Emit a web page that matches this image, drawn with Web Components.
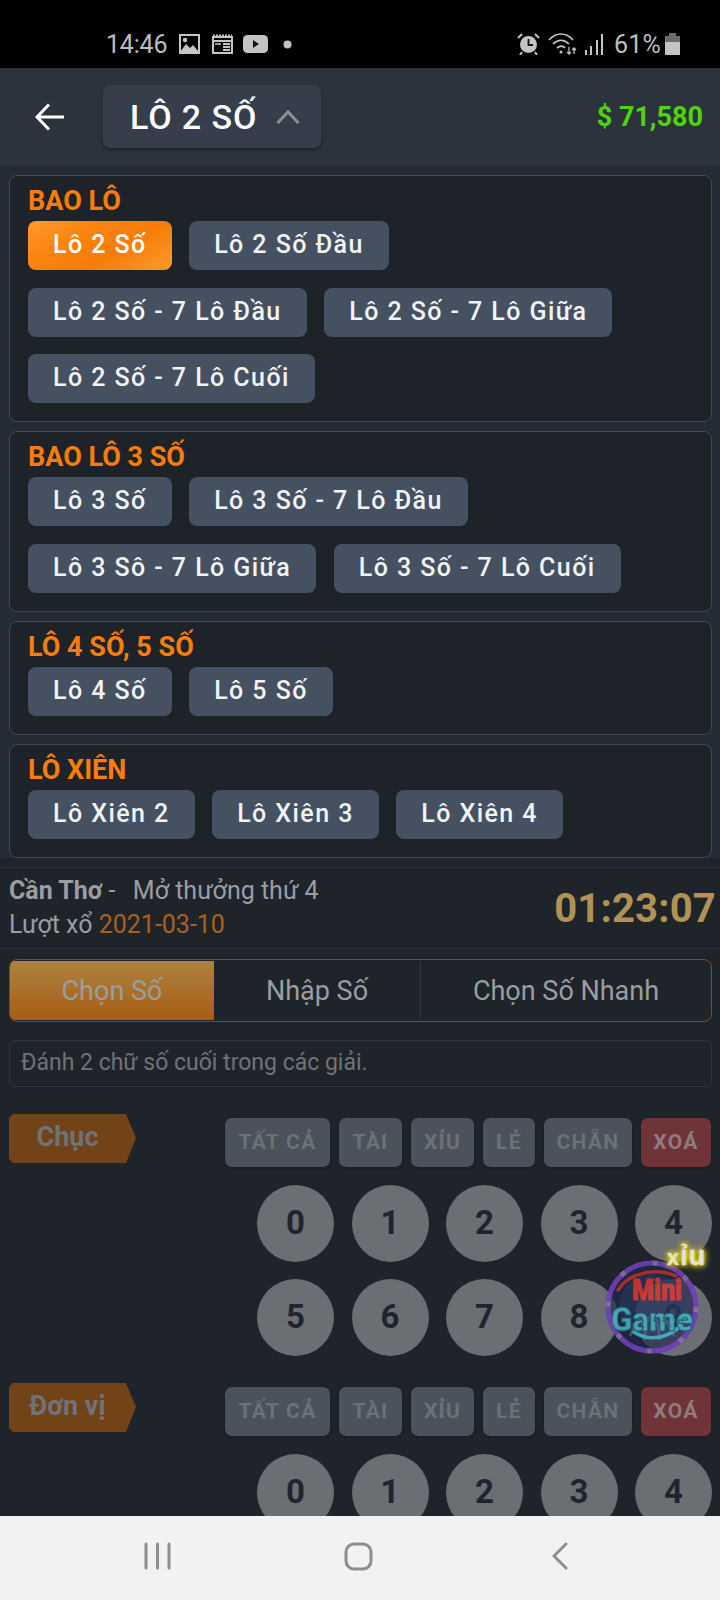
<!DOCTYPE html>
<html lang="vi"><head><meta charset="utf-8"><title>Lô 2 Số</title>
<style>
html,body{margin:0;padding:0;background:#000}
body{width:720px;height:1600px;overflow:hidden;font-family:Roboto,"Noto Sans",sans-serif;position:relative}
app-shell{display:flex}
</style></head><body>
<app-shell>
  <status-bar slot="top"></status-bar>
  <app-header slot="top" title="LÔ 2 SỐ" money="$ 71,580"></app-header>
  <menu-panel title="BAO LÔ" active="Lô 2 Số" items="Lô 2 Số|Lô 2 Số Đầu|Lô 2 Số - 7 Lô Đầu|Lô 2 Số - 7 Lô Giữa|Lô 2 Số - 7 Lô Cuối"></menu-panel>
  <menu-panel title="BAO LÔ 3 SỐ" items="Lô 3 Số|Lô 3 Số - 7 Lô Đầu|Lô 3 Sô - 7 Lô Giữa|Lô 3 Số - 7 Lô Cuối"></menu-panel>
  <menu-panel title="LÔ 4 SỐ, 5 SỐ" items="Lô 4 Số|Lô 5 Số"></menu-panel>
  <menu-panel title="LÔ XIÊN" items="Lô Xiên 2|Lô Xiên 3|Lô Xiên 4"></menu-panel>
  <draw-info></draw-info>
  <tab-bar></tab-bar>
  <hint-box>Đánh 2 chữ số cuối trong các giải.</hint-box>
  <number-pick label="Chục"></number-pick>
  <number-pick label="Đơn vị"></number-pick>
  <mini-game slot="float"></mini-game>
  <nav-bar slot="bottom"></nav-bar>
</app-shell>
<script>
const def=(name,html,setup)=>customElements.define(name,class extends HTMLElement{
  constructor(){super();this.attachShadow({mode:'open'})}
  connectedCallback(){this.shadowRoot.innerHTML=typeof html==='function'?html(this):html;if(setup)setup(this)}
});
def('app-shell',`<style>
:host{display:flex;flex-direction:column;width:720px;height:1600px;position:relative;overflow:hidden;background:#1f242b}
main{flex:1;min-height:0;overflow:hidden;display:block}
</style><slot name="top"></slot><main><slot></slot></main><slot name="bottom"></slot><slot name="float"></slot>`);

def('status-bar',`<style>
:host{display:flex;align-items:center;height:68px;background:#000;color:#bdbdbd;font:400 25px Roboto,sans-serif;padding:20px 40px 0 106px;box-sizing:border-box}
svg{display:block;flex:none}
.t{letter-spacing:-.2px}
.sp{flex:1}
</style>
<span class="t">14:46</span>
<svg style="margin-left:12px" width="21" height="20" viewBox="0 0 21 20"><rect x="1" y="1" width="19" height="18" fill="none" stroke="#c4c4c4" stroke-width="2"/><path d="M1 18l6-8 4 4 3-3 6 7v1H1z" fill="#c4c4c4"/><circle cx="6" cy="6" r="2.200" fill="#c4c4c4"/></svg>
<svg style="margin-left:12px" width="21" height="20" viewBox="0 0 21 20"><path d="M1 3h19v16H1z" fill="none" stroke="#c4c4c4" stroke-width="2"/><path d="M1 1.500h19" stroke="#c4c4c4" stroke-width="2" stroke-dasharray="2 1"/><path d="M1 7h19" stroke="#c4c4c4" stroke-width="2"/><path d="M11 10h7M11 13h7M11 16h7" stroke="#c4c4c4" stroke-width="1.800"/><path d="M3 10h6" stroke="#c4c4c4" stroke-width="1.500"/></svg>
<svg style="margin-left:10px" width="25" height="18" viewBox="0 0 25 18"><rect width="25" height="18" rx="4.500" fill="#c4c4c4"/><path d="M10 5l6 4-6 4z" fill="#111"/></svg>
<svg style="margin-left:15px" width="9" height="9" viewBox="0 0 9 9"><circle cx="4.500" cy="4.500" r="4" fill="#c4c4c4"/></svg>
<span class="sp"></span>
<svg width="23" height="22" viewBox="0 0 23 22"><circle cx="11.500" cy="11.500" r="8.500" fill="#c4c4c4"/><path d="M11.500 6v6h4.500" fill="none" stroke="#111" stroke-width="1.800"/><path d="M1 5l4-4M22 5l-4-4M5 19l-2 3M18 19l2 3" stroke="#c4c4c4" stroke-width="2"/></svg>
<svg style="margin-left:8px" width="29" height="24" viewBox="0 0 29 24" fill="none" stroke="#c4c4c4" stroke-width="1.700"><path d="M1 8c7-8 17-8 24 0M5 12c5-5 11-5 16 0M9 16c3-2.500 6-2.500 8 0"/><circle cx="13" cy="20" r="1.500" fill="#c4c4c4" stroke="none"/><path d="M21 15v7M19 20l2 2 2-2M26 22v-6M24 18l2-2 2 2" stroke-width="1.300"/></svg>
<svg style="margin-left:8px" width="19" height="22" viewBox="0 0 19 22" fill="#c4c4c4"><rect x="0" y="17" width="2" height="5"/><rect x="5" y="13" width="2" height="9"/><rect x="11" y="7" width="2" height="15"/><rect x="16" y="1" width="2" height="21"/></svg>
<span style="margin-left:10px;letter-spacing:.2px">61%</span>
<svg style="margin-left:4px" width="15" height="22" viewBox="0 0 15 22"><rect x="4" y="0" width="7" height="3" fill="#6c6c6c"/><rect x="0" y="3" width="15" height="6" fill="#6c6c6c"/><rect x="0" y="9" width="15" height="13" fill="#c4c4c4"/></svg>`);

def('app-header',h=>`<style>
:host{display:flex;align-items:center;height:98px;background:#2c333d;box-sizing:border-box;padding:0 17px 0 35px;color:#fff;font-family:Roboto,sans-serif}
svg{display:block;flex:none}
.dd{margin-left:39px;width:218px;height:63px;margin-top:-1px;border-radius:7px;background:#363d4b;box-shadow:0 2px 5px rgba(0,0,0,.35);display:flex;align-items:center;box-sizing:border-box;padding-left:27px;font-size:34px;font-weight:500;letter-spacing:.9px}
.dd svg{margin-left:19px}
.m{margin-left:auto;color:#4fd40a;font-size:27px;font-weight:700}
</style>
<svg width="29" height="28" viewBox="0 0 29 28" fill="none" stroke="#fff" stroke-width="3"><path d="M29 14H2M14 1.500L2 14l12 12.500"/></svg>
<div class="dd">${h.getAttribute('title')}<svg width="24" height="14" viewBox="0 0 24 14" fill="none" stroke="#8d9096" stroke-width="3"><path d="M1.500 13L12 2l10.500 11"/></svg></div>
<div class="m">${h.getAttribute('money')}</div>`);

def('menu-panel',h=>{
  const a=h.getAttribute('active');
  return `<style>
:host{display:block;background:#252b34;padding:9px 8px 0 9px}
.p{border:1px solid #414955;border-radius:8px;background:#1e2229;padding:9px 18px 18px 18px}
h3{margin:0 0 4px;height:32px;color:#f97d0b;font:700 27px/32px Roboto,sans-serif}
.w{display:flex;flex-wrap:wrap;row-gap:17.500px}
.c{height:49px;padding:0 25px;margin-right:17.500px;border-radius:8px;background:#455061;color:#f2f3f5;font:500 25px/47px Roboto,sans-serif;letter-spacing:1.430px;box-sizing:border-box;white-space:nowrap}
.c.on{background:linear-gradient(150deg,#ff9a2e 0%,#fb8512 30%,#f67c06 60%,#fd9a30 100%);color:#fff}
</style><div class="p"><h3>${h.getAttribute('title')}</h3><div class="w">${h.getAttribute('items').split('|').map(t=>`<div class="c${t===a?' on':''}">${t}</div>`).join('')}</div></div>`;
});

def('draw-info',`<style>
:host{display:flex;justify-content:space-between;align-items:center;margin-top:9.500px;height:82px;box-sizing:border-box;background:#1f242b;border-top:1px solid #332e2e;border-bottom:1px solid #332e2e;padding:0 4px 0 9px;color:#9a9da2;font:400 25px/34px Roboto,sans-serif}
b{font-weight:700}
.s{display:inline-block;width:5px}
.d{color:#a8621c}
.t{color:#b09354;font:700 40px Roboto,sans-serif;letter-spacing:.2px}
</style><div><div><b>Cần Thơ</b> -&nbsp;<span class="s"></span> Mở thưởng thứ 4</div><div>Lượt xổ <span class="d">2021-03-10</span></div></div><div class="t">01:23:07</div>`);

def('tab-bar',`<style>
:host{display:flex;height:63px;margin:10px 8px 0 9px;border:1px solid #7b4a20;border-radius:8px;overflow:hidden;box-sizing:border-box;color:#9a9da2;font:400 27px Roboto,sans-serif;padding:1px 0}
div{display:flex;align-items:center;justify-content:center;box-sizing:border-box}
.a{width:204px;background:linear-gradient(#ab8440,#a85c14)}
.b{width:207px;border-right:1px solid #333a44}
.c{flex:1}
</style><div class="a">Chọn Số</div><div class="b">Nhập Số</div><div class="c">Chọn Số Nhanh</div>`);

def('hint-box',`<style>
:host{display:block;height:47px;margin:18px 8px 0 9px;border:1px solid #2f353e;border-radius:6px;box-sizing:border-box;padding-left:11px;color:#6f7379;font:400 23px/43px Roboto,sans-serif}
</style><slot></slot>`);

def('number-pick',h=>{
  const q=[['TẤT CẢ',105],['TÀI',63],['XỈU',63],['LẺ',52],['CHẴN',88],['XOÁ',70]];
  return `<style>
:host{display:flex;justify-content:space-between;margin:27px 8px 0 9px;font-family:Roboto,sans-serif}
.l{width:127px;height:49px;background:#724317;clip-path:polygon(0 4px,4px 0,117px 0,127px 24px,117px 49px,4px 49px,0 45px);color:#6f7277;font:700 27px/46px Roboto,sans-serif;text-align:center;padding-right:10px;box-sizing:border-box}
.r{width:487px}
.q{display:grid;grid-template-columns:${q.map(x=>x[1]+'px').join(' ')};gap:9px;margin-top:4px}
.q div{height:49px;border-radius:7px;background:#4c525b;color:#6c7178;font:700 21px/49px Roboto,sans-serif;letter-spacing:1.300px;text-align:center;box-shadow:0 1px 3px rgba(0,0,0,.25)}
.q .x{background:#6e3438;color:#8f7c7f}
.n{display:grid;grid-template-columns:repeat(5,77px);gap:17px 17.500px;justify-content:end;margin-top:18px}
.n div{width:77px;height:77px;border-radius:50%;background:#6b6e73;color:#1f252c;font:700 33px/76px Roboto,sans-serif;text-align:center}
</style><div class="l">${h.getAttribute('label')}</div><div class="r"><div class="q">${q.map(x=>`<div${x[0]==='XOÁ'?' class="x"':''}>${x[0]}</div>`).join('')}</div><div class="n">${[0,1,2,3,4,5,6,7,8,9].map(n=>`<div>${n}</div>`).join('')}</div></div>`;
});

def('mini-game',`<style>
:host{position:absolute;left:600px;top:1244px;width:116px;height:110px}
svg{display:block;overflow:visible;opacity:.9}
.x{position:absolute;left:67px;top:-3px;font:700 27px/30px "Liberation Sans",sans-serif;color:#e2e2e2;text-shadow:0 0 2px #f3e21a,0 0 4px #f3e21a,0 0 7px #d8c610,0 0 9px #b8a80c;letter-spacing:1px;white-space:nowrap}
.x i{font-style:normal;font-size:22px}
</style>
<svg width="116" height="110" viewBox="0 0 116 110">
<circle cx="52" cy="63" r="44" fill="#23284f" fill-opacity=".72" stroke="#6d3fb8" stroke-width="5"/>
<circle cx="52" cy="63" r="44" fill="none" stroke="#8a8a9a" stroke-width="5" stroke-dasharray="5 29.600" stroke-opacity=".7"/>
<circle cx="52" cy="63" r="33" fill="#2a3d66" fill-opacity=".55"/>
<path d="M30 92l10-20M44 96l4-24M60 96l-4-24M74 92l-10-20" stroke="#55658a" stroke-width="3" stroke-opacity=".7"/>
<path d="M18 46C30 27 58 24 76 32" fill="none" stroke="#b4322c" stroke-width="3.500" stroke-linecap="round"/>
<path d="M34 88c18 12 44 4 52-16" fill="none" stroke="#3fb0c0" stroke-width="3.500" stroke-linecap="round"/>
<text x="32" y="56" font-family="Roboto,sans-serif" font-weight="900" font-size="29" fill="#d0392f" stroke="#d0392f" stroke-width="1" textLength="50" lengthAdjust="spacingAndGlyphs">Mini</text>
<text x="11" y="87" font-family="Roboto,sans-serif" font-weight="900" font-size="34" fill="#45aebd" stroke="#1f5a70" stroke-width="1" textLength="82" lengthAdjust="spacingAndGlyphs">Game</text>
</svg><div class="x"><i>x</i>ỉu</div>`);

def('nav-bar',`<style>
:host{display:flex;height:84px;flex:none;background:#f2f2f2;align-items:center;box-sizing:border-box;padding:0 0 4px 144px}
svg{display:block;flex:none}
</style>
<svg width="27" height="28" viewBox="0 0 27 28" stroke="#8e8e8e" stroke-width="3" stroke-linecap="round"><path d="M2 2v24M13.500 2v24M25 2v24"/></svg>
<svg style="margin-left:173px" width="29" height="29" viewBox="0 0 29 29" fill="none" stroke="#8e8e8e" stroke-width="3"><rect x="2" y="2" width="25" height="25" rx="8"/></svg>
<svg style="margin-left:178px" width="17" height="28" viewBox="0 0 17 28" fill="none" stroke="#8e8e8e" stroke-width="3" stroke-linecap="round" stroke-linejoin="round"><path d="M15 2L3 14l12 12"/></svg>`);
</script>
</body></html>
